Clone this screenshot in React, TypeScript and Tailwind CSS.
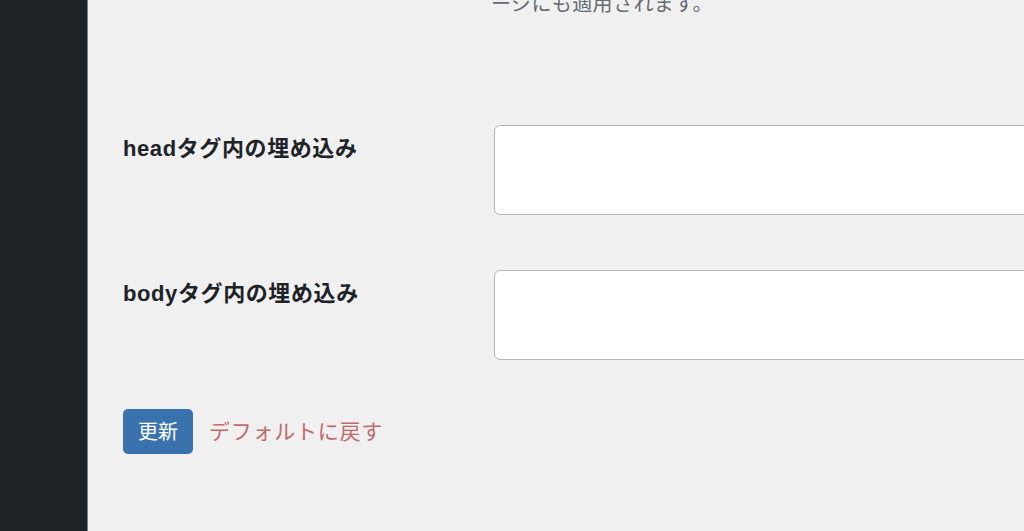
const font = {
  fontFamily: '"Liberation Sans", "Noto Sans CJK JP", sans-serif',
};

const Field = ({ label }: { label: string }) => (
  <div className="flex">
    <label className="w-[371px] shrink-0 pt-[9px] text-[22px] font-bold leading-[30px] tracking-[0.6px] text-[#1d2327]">
      {label}
    </label>
    <textarea className="h-[90px] w-[560px] shrink-0 resize-none rounded-[6px] border-[1.5px] border-[#b4b6b9] bg-white" />
  </div>
);

const App = () => {
  return (
    <div className="flex h-[531px] w-[1024px] overflow-hidden bg-[#f0f0f1]" style={font}>
      <aside className="h-full w-[88px] shrink-0 border-r border-[#7c8085] bg-[#1d2327]" />
      <main className="flex-1 pl-[35px]">
        <div className="-mt-[9px] pl-[368px] text-[20px] leading-[26px] tracking-[0.4px] text-[#646970]">
          ージにも適用されます。
        </div>
        <div className="mt-[108px] flex flex-col gap-[55px]">
          <Field label="headタグ内の埋め込み" />
          <Field label="bodyタグ内の埋め込み" />
        </div>
        <div className="mt-[49px] flex items-center gap-[16px]">
          <button className="h-[45px] w-[70px] rounded-[5px] bg-[#3a72ad] text-[20px] text-white">
            更新
          </button>
          <a className="text-[21px] tracking-[0.75px] text-[#c06a6a]">デフォルトに戻す</a>
        </div>
      </main>
    </div>
  );
};

export default App;
